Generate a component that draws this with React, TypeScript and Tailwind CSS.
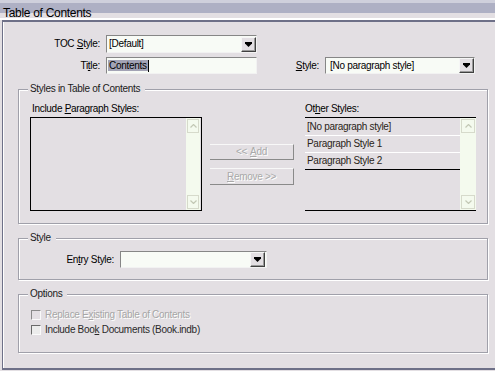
import React from "react";

const FONT = { fontFamily: '"Liberation Sans", Arial, sans-serif' };

function Arrow() {
  return (
    <div className="w-[15px] h-[15px] shrink-0 bg-[#e3dfe3] border border-t-[#f6f6f6] border-l-[#f6f6f6] border-r-[#404040] border-b-[#404040] shadow-[inset_-1px_-1px_0_#9a9a9a] flex items-center justify-center">
      <svg width="7" height="5" viewBox="0 0 7 5">
        <path d="M0 0h7v1.5L3.5 5 0 1.5z" fill="#000" />
      </svg>
    </div>
  );
}

function ScrollBar({ w }: { w: string }) {
  return (
    <div className={`${w} h-full shrink-0 bg-[#f4faee] flex flex-col justify-between p-[1px]`}>
      <div className="h-[14px] border border-[#d6dacb] flex items-center justify-center">
        <svg width="7" height="4" viewBox="0 0 7 4">
          <path d="M0.5 3.5L3.5 0.5L6.5 3.5" fill="none" stroke="#c3c8b5" strokeWidth="1.2" />
        </svg>
      </div>
      <div className="h-[14px] border border-[#d6dacb] flex items-center justify-center">
        <svg width="7" height="4" viewBox="0 0 7 4">
          <path d="M0.5 0.5L3.5 3.5L6.5 0.5" fill="none" stroke="#c3c8b5" strokeWidth="1.2" />
        </svg>
      </div>
    </div>
  );
}

function Legend({ children }: { children: React.ReactNode }) {
  return (
    <span className="absolute -top-[7px] left-[9px] bg-[#e3dfe3] pl-[2px] pr-[5px] leading-[12px] text-[#1a1a1a]">
      {children}
    </span>
  );
}

const groupCls =
  "relative w-[470px] ml-[14px] border border-[#a0a0aa] shadow-[inset_1px_1px_0_#ffffff,1px_1px_0_#ffffff]";

export default function App() {
  return (
    <div
      className="w-[495px] h-[371px] bg-[#e3dfe3] overflow-hidden text-[10px] tracking-[-0.3px] text-black"
      style={FONT}
    >
      {/* Title bar */}
      <div className="h-[18px] pl-[3px] pt-[7px] text-[12px] leading-[12px] tracking-[-0.3px] bg-[linear-gradient(to_bottom,#cfd0dc_0px,#cfd0dc_3px,#aeb0c4_3px,#aeb0c4_13px,#e3dfe3_13px)]">
        Table of Contents
      </div>

      {/* Dialog body frame */}
      <div className="h-[353px] border-t-2 border-white">
        <div className="h-[350px] ml-[2px] border-t-2 border-b-2 border-l border-[#6e7088]">
          <div className="h-full border-l border-white pt-[13px]">
            {/* Row 1 */}
            <div className="flex items-center h-[18px]">
              <div className="w-[102px] text-right pr-[6px] leading-[12px]">
                TOC <u className="underline-offset-1">S</u>tyle:
              </div>
              <div className="w-[151px] h-[18px] flex items-center border border-t-[#868686] border-l-[#868686] border-b-[#f2f2f2] border-r-[#f2f2f2] bg-[#f8fbf6] pl-[2px]">
                <span className="flex-1 leading-[12px]">[Default]</span>
                <Arrow />
              </div>
            </div>

            {/* Row 2 */}
            <div className="flex items-center h-[17px] mt-[4px]">
              <div className="w-[102px] text-right pr-[6px] leading-[12px]">
                Ti<u className="underline-offset-1">t</u>le:
              </div>
              <div className="w-[151px] h-[17px] flex items-center border border-t-[#868686] border-l-[#868686] border-b-[#f2f2f2] border-r-[#f2f2f2] bg-[#f8fbf6] pl-[1px]">
                <span className="bg-[#a3a3b5] leading-[11px] px-[1px]">Contents</span>
                <span className="w-[1px] h-[12px] bg-black" />
              </div>
              <div className="w-[68px] text-right pr-[6px] leading-[12px]">
                <u className="underline-offset-1">S</u>tyle:
              </div>
              <div className="w-[150px] h-[17px] flex items-center border border-t-[#868686] border-l-[#868686] border-b-[#f2f2f2] border-r-[#f2f2f2] bg-[#f8fbf6] pl-[4px]">
                <span className="flex-1 leading-[12px]">[No paragraph style]</span>
                <Arrow />
              </div>
            </div>

            {/* Group: Styles in Table of Contents */}
            <div className={`${groupCls} mt-[15px] h-[135px] pt-[13px] pl-[11px]`}>
              <Legend>Styles in Table of Contents</Legend>
              <div className="flex h-[12px] leading-[12px]">
                <div className="w-[275px] pl-[2px]">
                  Include <u className="underline-offset-1">P</u>aragraph Styles:
                </div>
                <div>
                  Ot<u className="underline-offset-1">h</u>er Styles:
                </div>
              </div>
              <div className="flex items-start mt-[2px]">
                {/* Left list */}
                <div className="w-[172px] h-[94px] border border-black bg-[#e3dfe3] flex justify-end pr-[1px]">
                  <ScrollBar w="w-[14px]" />
                </div>
                {/* Buttons */}
                <div className="ml-[8px] mt-[27px] flex flex-col gap-[8px]">
                  <div className="w-[84px] h-[16px] border-t border-r border-b border-t-[#f8f8f8] border-r-[#8a8a8a] border-b-[#8a8a8a] flex items-center justify-center text-[#a9a9a9] [text-shadow:1px_1px_0_#ffffff] leading-[12px]">
                    &lt;&lt; <u className="underline-offset-1 ml-[3px]">A</u>dd
                  </div>
                  <div className="w-[84px] h-[17px] border-t border-r border-b border-t-[#f8f8f8] border-r-[#8a8a8a] border-b-[#8a8a8a] flex items-center justify-center text-[#a9a9a9] [text-shadow:1px_1px_0_#ffffff] leading-[12px]">
                    <u className="underline-offset-1">R</u>emove &gt;&gt;
                  </div>
                </div>
                {/* Right list */}
                <div className="ml-[11px] w-[171px] h-[94px] border-t border-b border-black flex">
                  <div className="flex-1 flex flex-col">
                    <div className="h-[18px] border-b border-white flex items-center pl-[2px] leading-[12px] text-[#2a2418]">
                      [No paragraph style]
                    </div>
                    <div className="h-[17px] border-b border-white flex items-center pl-[2px] leading-[12px] text-[#2a2418]">
                      Paragraph Style 1
                    </div>
                    <div className="h-[17px] border-b border-black flex items-center pl-[2px] leading-[12px] text-[#2a2418]">
                      Paragraph Style 2
                    </div>
                  </div>
                  <ScrollBar w="w-[16px]" />
                </div>
              </div>
            </div>

            {/* Group: Style */}
            <div className={`${groupCls} mt-[14px] h-[42px] pt-[12px]`}>
              <Legend>Style</Legend>
              <div className="flex items-center h-[17px]">
                <div className="w-[101px] text-right pr-[6px] leading-[12px]">
                  En<u className="underline-offset-1">t</u>ry Style:
                </div>
                <div className="w-[147px] h-[17px] flex items-center justify-end border border-t-[#868686] border-l-[#868686] border-b-[#f2f2f2] border-r-[#f2f2f2] bg-[#f8fbf6] pr-[1px]">
                  <Arrow />
                </div>
              </div>
            </div>

            {/* Group: Options */}
            <div className={`${groupCls} mt-[14px] h-[59px] pt-[13px] pl-[12px]`}>
              <Legend>Options</Legend>
              <div className="flex items-center h-[14px]">
                <div className="w-[10px] h-[10px] border border-t-[#8a8a8a] border-l-[#8a8a8a] border-b-[#fafafa] border-r-[#fafafa] bg-[#e3dfe3]" />
                <span className="ml-[4px] leading-[12px] text-[#a6a6a6] [text-shadow:1px_1px_0_#ffffff]">
                  Replace E<u className="underline-offset-1">x</u>isting Table of Contents
                </span>
              </div>
              <div className="flex items-center h-[14px] mt-[1px]">
                <div className="w-[10px] h-[10px] border border-t-[#6a6a6a] border-l-[#6a6a6a] border-b-[#fafafa] border-r-[#fafafa] bg-[#ececec]" />
                <span className="ml-[4px] leading-[12px] text-[#2a2a2a]">
                  Include Boo<u className="underline-offset-1">k</u> Documents (Book.indb)
                </span>
              </div>
            </div>
          </div>
        </div>
      </div>
    </div>
  );
}
